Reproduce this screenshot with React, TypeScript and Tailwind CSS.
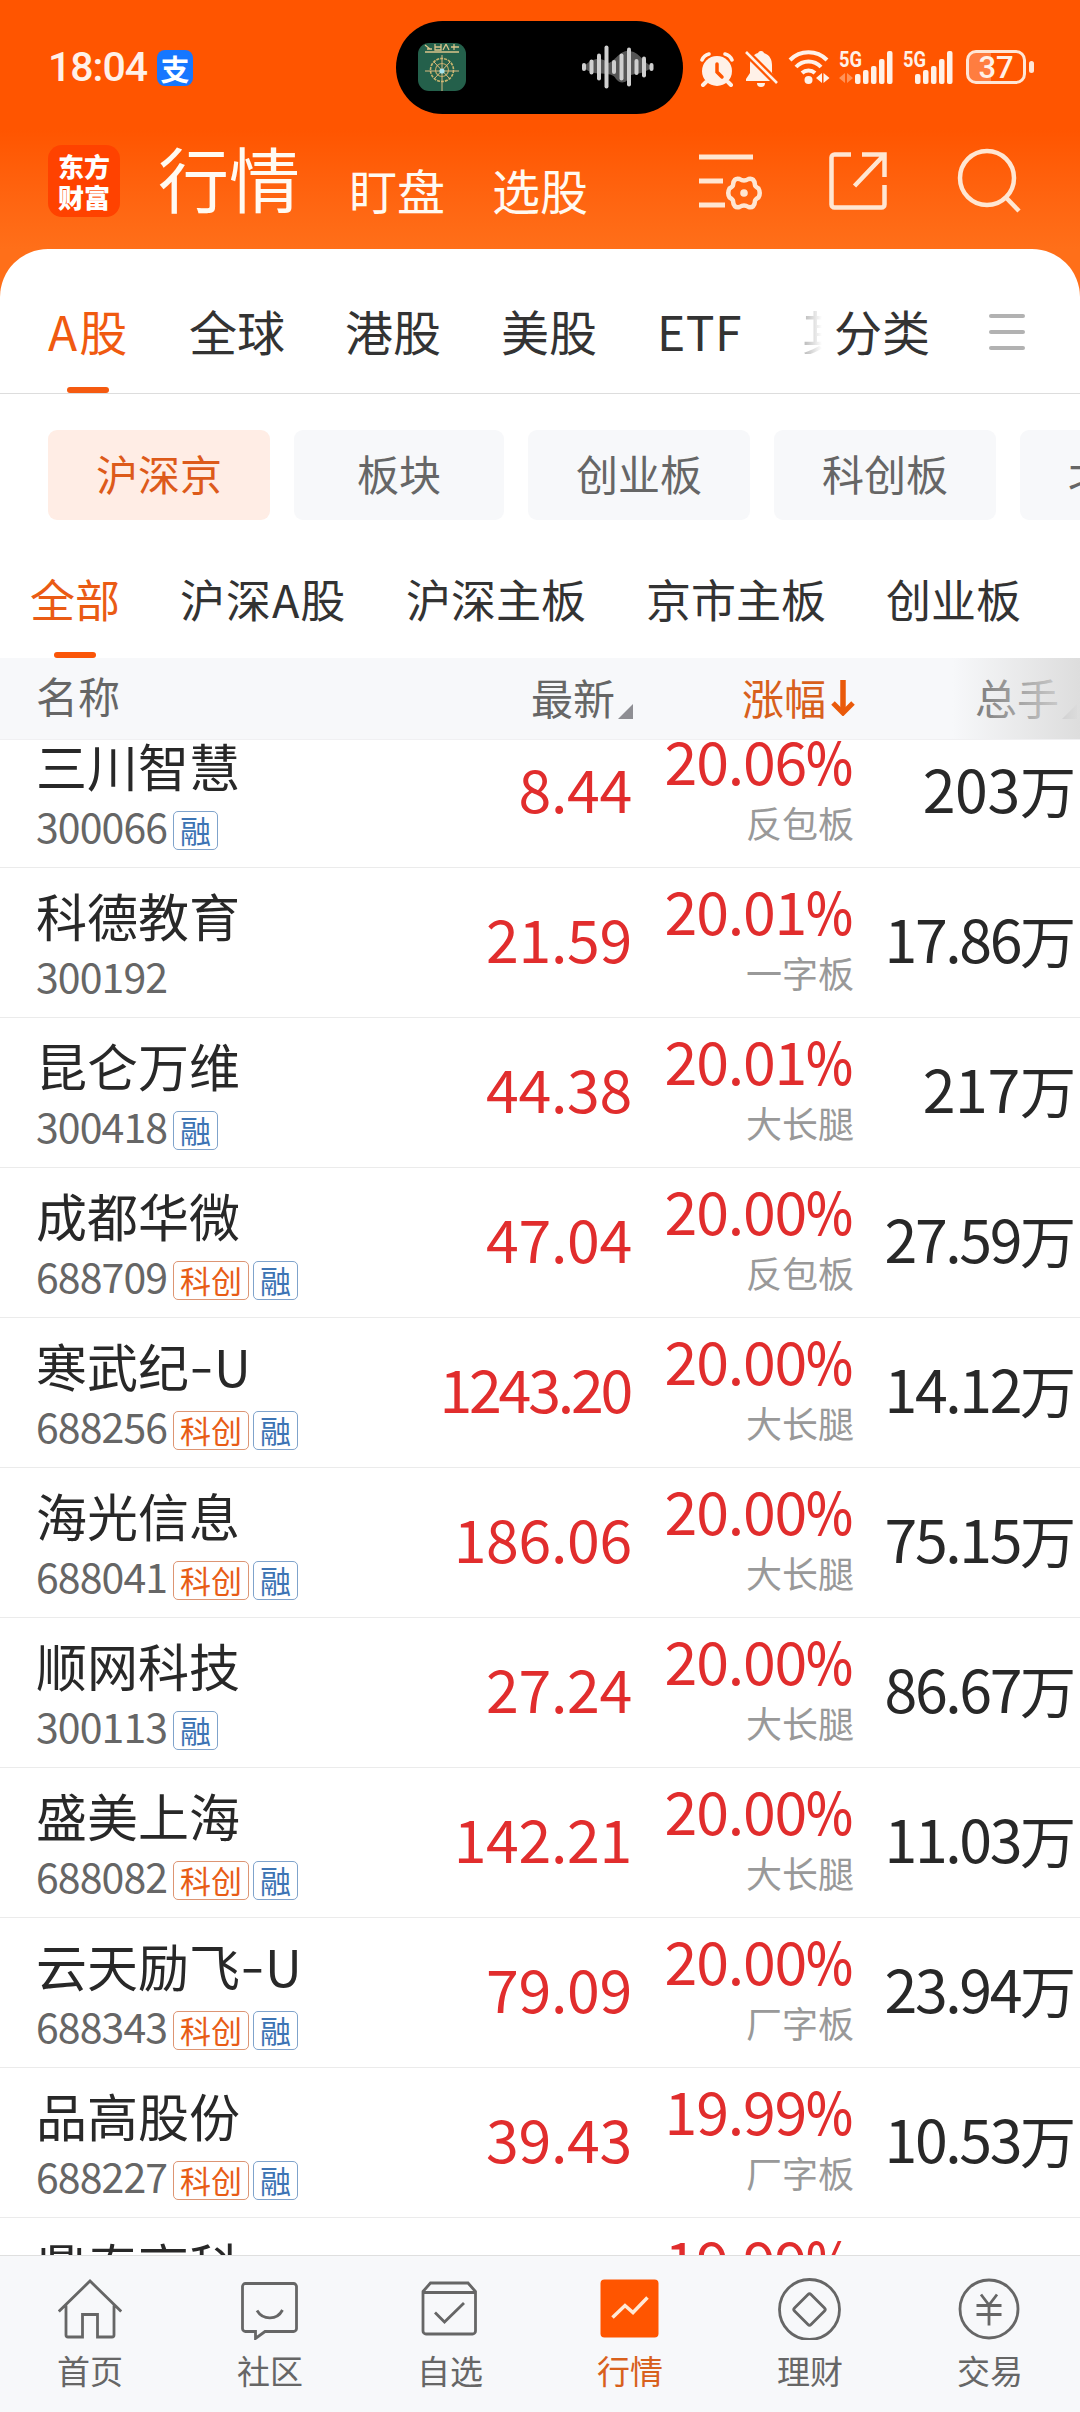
import type { ReactNode } from "react"
import clsx from "clsx"

type Stock = {
    name: string
    unprofitable?: boolean
    code: string
    star?: boolean
    margin?: boolean
    price: string
    change: string
    shape: string
    volume: string
}

const stocks: Stock[] = [
    { name: "三川智慧", code: "300066", margin: true, price: "8.44", change: "20.06", shape: "反包板", volume: "203" },
    { name: "科德教育", code: "300192", price: "21.59", change: "20.01", shape: "一字板", volume: "17.86" },
    { name: "昆仑万维", code: "300418", margin: true, price: "44.38", change: "20.01", shape: "大长腿", volume: "217" },
    { name: "成都华微", code: "688709", star: true, margin: true, price: "47.04", change: "20.00", shape: "反包板", volume: "27.59" },
    { name: "寒武纪", unprofitable: true, code: "688256", star: true, margin: true, price: "1243.20", change: "20.00", shape: "大长腿", volume: "14.12" },
    { name: "海光信息", code: "688041", star: true, margin: true, price: "186.06", change: "20.00", shape: "大长腿", volume: "75.15" },
    { name: "顺网科技", code: "300113", margin: true, price: "27.24", change: "20.00", shape: "大长腿", volume: "86.67" },
    { name: "盛美上海", code: "688082", star: true, margin: true, price: "142.21", change: "20.00", shape: "大长腿", volume: "11.03" },
    { name: "云天励飞", unprofitable: true, code: "688343", star: true, margin: true, price: "79.09", change: "20.00", shape: "厂字板", volume: "23.94" },
    { name: "品高股份", code: "688227", star: true, margin: true, price: "39.43", change: "19.99", shape: "厂字板", volume: "10.53" },
    { name: "鼎泰高科", code: "301377", margin: true, price: "98.76", change: "19.99", shape: "大长腿", volume: "12.48" },
]

const waveBars = [8, 15, 27, 43, 14, 27, 39, 16, 21, 8]
const signalBars = [10, 14, 18, 25, 33]

const Signal = ({ data }: { data?: boolean }) => {
    const start = data ? 16 : 12
    return (
        <svg viewBox={data ? "0 0 54 36" : "0 0 50 36"} className={data ? "w-[54px] h-9" : "w-[50px] h-9"}>
            <text x="0" y="18" fontFamily="Roboto, sans-serif" fontWeight="700" fontSize="22.500" textLength="23" lengthAdjust="spacingAndGlyphs" fill="#fff1e8">5G</text>
            {data && <path d="M0 29l6-5v10zM8 24v10l6-5z" fill="#ff9257" />}
            {signalBars.map((h, i) => (
                <rect key={h} x={start + i * 8} y={35 - h} width="5.500" height={h} rx="2" fill="#fff1e8" />
            ))}
        </svg>
    )
}

const StatusBar = () => (
    <div className="flex items-center shrink-0 h-[134px] pl-12">
        <span className="shrink-0 font-['Roboto'] font-medium text-[41px] leading-none tracking-[-1px] w-[109px] text-[#fff1e8]">18:04</span>
        <span className="flex items-center justify-center shrink-0 size-9 mt-[2px] rounded-lg bg-[#1677ff] text-white text-[29px] font-bold leading-none">支</span>
        <div className="flex items-center justify-between shrink-0 w-[287px] h-[93px] ml-[203px] pl-[22px] pr-7 rounded-full bg-black">
            <svg viewBox="0 0 48 48" className="size-12">
                <rect width="48" height="48" rx="11" fill="#24604b" />
                <path d="M7 2l5 4M9 6h5M17 1v6h6V1M17 4h6M28 1l-3 6M28 1l3 6M36 1v6M33 4h8M7 9h34" stroke="#d9c48c" strokeWidth="1.3" fill="none" />
                <circle cx="24" cy="27" r="11.5" fill="none" stroke="#c8b56e" strokeWidth="1.6" strokeDasharray="3 1" />
                <circle cx="24" cy="27" r="6.5" fill="none" stroke="#b7a766" strokeWidth="1.2" />
                <path d="M24 12v36M7 28h34M16 19l16 17M32 19L16 36" stroke="#d9b982" strokeWidth="1" />
                <circle cx="24" cy="28" r="2.6" fill="#a7e4ee" />
            </svg>
            <svg viewBox="0 0 74 44" className="w-[74px] h-11">
                <path d="M2 22C12 12 20 12 28 18C36 14 40 4 49 6C60 8 62 18 72 22C60 30 56 28 50 30C46 38 40 40 35 34C30 24 14 34 2 22z" fill="#555" />
                {waveBars.map((h, i) => (
                    <rect key={i} x={1 + i * 7.5} y={22 - h / 2} width="4" height={h} rx="2" fill="#cfcfcf" />
                ))}
            </svg>
        </div>
        <svg viewBox="0 0 34 36" className="shrink-0 w-[34px] h-9 ml-[17px] mt-1">
            <circle cx="17" cy="20" r="15" fill="#fff1e8" />
            <path d="M2 9a10 10 0 0 1 7-6M25 3a10 10 0 0 1 7 6" stroke="#fff1e8" strokeWidth="3.5" fill="none" strokeLinecap="round" />
            <path d="M6 31l-3 3M28 31l3 3" stroke="#fff1e8" strokeWidth="4" strokeLinecap="round" />
            <path d="M17 13v8l5 5" stroke="#ff5500" strokeWidth="3.5" fill="none" strokeLinecap="round" />
        </svg>
        <svg viewBox="0 0 34 38" className="shrink-0 w-[34px] h-[38px] ml-[10px] mt-1">
            <path d="M17 1a3 3 0 0 1 3 2c6 2 8 7 8 12v8l4 6v2H2v-2l4-6v-8C6 9 8 5 14 3a3 3 0 0 1 3-2z" fill="#fff1e8" />
            <path d="M13 33h8a4 4 0 0 1-8 0z" fill="#fff1e8" />
            <path d="M0 0l34 34" stroke="#ff5500" strokeWidth="7" />
            <path d="M2 2l31 31" stroke="#fff1e8" strokeWidth="2.6" />
        </svg>
        <svg viewBox="0 0 42 36" className="shrink-0 w-[42px] h-9 ml-[10px]">
            <path d="M2 11a26 26 0 0 1 37 0M8 18a17 17 0 0 1 25 0M14 24a9.5 9.5 0 0 1 13 0" stroke="#fff1e8" strokeWidth="4" fill="none" />
            <circle cx="20.500" cy="31" r="4" fill="#fff1e8" />
            <path d="M28 29l6-5v10zM35.500 24v10l6-5z" fill="#fff1e8" />
        </svg>
        <div className="flex shrink-0 gap-[10px] ml-[9px]">
            <Signal data />
            <Signal />
        </div>
        <div className="flex items-center shrink-0 gap-[3px] ml-[13px]">
            <div className="flex items-center justify-center w-[60px] h-[34px] rounded-[10px] border-[3px] border-[#ffe6d6] bg-linear-to-r from-[#ff7d40] from-40% to-transparent to-40% font-['Roboto'] font-medium text-[31px] leading-none text-[#fff1e8]">37</div>
            <div className="w-[5px] h-3 rounded-full bg-[#ffe6d6]" />
        </div>
    </div>
)

const TopBar = () => (
    <div className="flex items-start shrink-0 h-[115px] pt-[11px] pl-12 text-[#fffaf2]">
        <div className="flex items-center justify-center shrink-0 size-[72px] rounded-[14px] bg-[#ff4200] text-white text-[26px] leading-[31px] font-black text-center">
            东方<br />财富
        </div>
        <h1 className="shrink-0 ml-[38px] -mt-1 w-[142px] text-[71px] leading-[70px]">行情</h1>
        <span className="shrink-0 ml-[49px] w-24 pt-5 text-[48px] leading-[48px]">盯盘</span>
        <span className="shrink-0 ml-[47px] w-24 pt-5 text-[48px] leading-[48px]">选股</span>
        <svg viewBox="0 0 66 60" className="shrink-0 w-[66px] h-[60px] mt-[6px] ml-[111px]" fill="none" stroke="#ffe6d2" strokeWidth="5">
            <path d="M0 6h54M0 30h24M0 54h26" />
            <path d="M40.500 28q4.500 3 9 0q6-1.500 6.500 6q0 1.500 3.500 3.500q2.500 4.500 0 9q-3.500 2-3.500 3.500q-.5 7.500-6.500 6q-4.500-3-9 0q-6 1.500-6.500-6q0-1.500-3.500-3.500q-2.500-4.500 0-9q3.500-2 3.500-3.500q.5-7.500 6.500-6z" strokeWidth="4.500" strokeLinejoin="round" />
            <circle cx="45" cy="42" r="3.800" fill="#ffe6d2" stroke="none" />
        </svg>
        <svg viewBox="0 0 58 58" className="shrink-0 size-[58px] mt-[7px] ml-[64px]" fill="none" stroke="#ffe6d2" strokeWidth="4.500">
            <path d="M22 2.500H5.500a3 3 0 0 0-3 3v47a3 3 0 0 0 3 3h47a3 3 0 0 0 3-3V33M33 2.500h22.500V25M55 3L25.500 34" />
        </svg>
        <svg viewBox="0 0 64 66" className="shrink-0 w-16 h-[66px] mt-[3px] ml-[70px]" fill="none" stroke="#ffe6d2" strokeWidth="4.500">
            <circle cx="30" cy="30" r="27" />
            <path d="M48.500 49L62 63" />
        </svg>
    </div>
)

const MarketTabs = () => (
    <div className="flex items-center shrink-0 h-[145px] pl-12 border-b border-[#dddddd] text-[48px] leading-[48px] text-[#333333]">
        <div className="relative flex items-center shrink-0 h-full w-[82px] mr-[59px] text-[#f05a10] tracking-[2px]">
            <span className="mt-[18px] whitespace-nowrap">A股</span>
            <i className="absolute bottom-0 left-[19px] w-[42px] h-1.5 rounded-full bg-[#f55a10]" />
        </div>
        <span className="mt-[18px] shrink-0 w-24 mr-[60px]">全球</span>
        <span className="mt-[18px] shrink-0 w-24 mr-[60px]">港股</span>
        <span className="mt-[18px] shrink-0 w-24 mr-[60px]">美股</span>
        <span className="mt-[18px] shrink-0 w-[88px] mr-[57px] tracking-[0.5px]">ETF</span>
        <span className="mt-[18px] shrink-0 w-5 mr-3 overflow-hidden whitespace-nowrap text-transparent bg-clip-text bg-linear-to-r from-[#b4b4b4] to-white">其</span>
        <span className="mt-[18px] shrink-0 w-24">分类</span>
        <div className="flex flex-col gap-3 mt-[22px] ml-[59px]">
            <i className="w-9 h-1 rounded-full bg-[#b2b2b2]" />
            <i className="w-9 h-1 rounded-full bg-[#b2b2b2]" />
            <i className="w-9 h-1 rounded-full bg-[#b2b2b2]" />
        </div>
    </div>
)

const chip = "flex items-center justify-center shrink-0 h-[90px] pb-1 rounded-[9px] text-[42px] leading-none"

const Chips = () => (
    <div className="flex shrink-0 gap-6 pt-9 pl-12 overflow-hidden text-[#666666]">
        <div className={clsx(chip, "w-[222px] bg-[#ffede5] text-[#dd5a1a]")}>沪深京</div>
        <div className={clsx(chip, "w-[210px] bg-[#f7f8fa]")}>板块</div>
        <div className={clsx(chip, "w-[222px] bg-[#f7f8fa]")}>创业板</div>
        <div className={clsx(chip, "w-[222px] bg-[#f7f8fa]")}>科创板</div>
        <div className={clsx(chip, "w-[222px] bg-[#f7f8fa]")}>北交所</div>
    </div>
)

const BoardTabs = () => (
    <div className="flex shrink-0 gap-16 h-[138px] pt-14 pl-[30px] overflow-hidden whitespace-nowrap text-[45px] leading-[45px] text-[#333333]">
        <div className="relative shrink-0 w-[90px] text-[#ea5b14]">
            全部
            <i className="absolute bottom-0 left-6 w-[42px] h-1.5 rounded-full bg-[#fa5508]" />
        </div>
        <span className="shrink-0 w-[162px] -ml-1 tracking-[1px]">沪深A股</span>
        <span>沪深主板</span>
        <span className="-ml-[4px]">京市主板</span>
        <span className="-ml-[4px]">创业板</span>
    </div>
)

const SortMark = () => (
    <svg viewBox="0 0 15 15" className="size-[15px] shrink-0 mt-[29px] ml-[3px]">
        <path d="M15 0v15H0z" fill="#8e8e93" />
    </svg>
)

const TableHead = () => (
    <div className="relative flex items-center shrink-0 h-[82px] pl-9 pb-[3px] border-b border-[#f0f0f2] bg-[#f7f8fa] text-[42px] leading-none text-[#666666]">
        <span className="shrink-0 w-[495px] pb-1">名称</span>
        <div className="flex items-center shrink-0 w-[211px]">最新<SortMark /></div>
        <div className="flex items-center shrink-0 w-[233px] text-[#d8601c]">
            涨幅
            <svg viewBox="0 0 24 36" className="w-6 h-9 ml-[5px] mt-[2px]" fill="none" stroke="#ea5a0a">
                <path d="M12 0v33" strokeWidth="5.500" />
                <path d="M2 23l10 10l10-10" strokeWidth="5" />
            </svg>
        </div>
        <div className="flex items-center shrink-0">总手<SortMark /></div>
        <div className="absolute right-0 top-0 w-32 h-full bg-linear-to-r from-[#f7f8fa]/0 to-[#dddddd]" />
    </div>
)

const Tag = ({ className, children }: { className: string, children: ReactNode }) => (
    <span className={clsx("flex items-center justify-center h-[39px] px-[6px] pb-[2px] rounded-[5px] border text-[31px] leading-none", className)}>
        {children}
    </span>
)

const StockRow = ({ stock }: { stock: Stock }) => (
    <div className="flex h-[150px] pl-9 border-b border-[#ebebeb]">
        <div className="shrink-0 w-[364px] pt-[21px]">
            <div className="text-[51px] leading-[52px] text-[#282828] whitespace-nowrap">
                {stock.name}
                {stock.unprofitable && <><span className="inline-block w-[25px] text-center scale-x-[1.35] -translate-y-[2px]">-</span>U</>}
            </div>
            <div className="flex items-center gap-[4px] h-[39px] mt-5">
                <span className="w-[133px] text-[41px] leading-[39px] tracking-[-0.9px] text-[#666666] pb-[10px]">{stock.code}</span>
                {stock.star && <Tag className="text-[#e85d16] border-[#dd9573]">科创</Tag>}
                {stock.margin && <Tag className="text-[#3c74b4] border-[#7fa3cb]">融</Tag>}
            </div>
        </div>
        <div className={clsx("shrink-0 w-[232px] pt-10 text-right text-[59px] leading-[60px] text-[#e12d2d]", stock.price.length > 6 ? "pr-[2px] tracking-[-3.2px]" : "tracking-[-0.3px]")}>
            {stock.price}
        </div>
        <div className="shrink-0 w-[222px] pt-3">
            <div className="flex justify-end pr-[3px] text-[59px] leading-[60px] tracking-[-1.2px] text-[#e12d2d]">
                {stock.change}
                <span className="w-[45px] origin-left scale-x-[0.85] font-medium">%</span>
            </div>
            <div className="mt-[14px] text-right text-[36px] leading-9 text-[#999999]">{stock.shape}</div>
        </div>
        <div className={clsx("shrink-0 w-[222px] pt-10 text-right text-[59px] leading-[60px] text-[#282828]", stock.volume.length > 3 ? "tracking-[-2.4px]" : "tracking-[-0.3px]")}>
            {stock.volume}<span className="text-[56px] tracking-normal">万</span>
        </div>
    </div>
)

const navItems: { label: string, active?: boolean, icon: ReactNode }[] = [
    { label: "首页", icon: <path d="M.8 35.500L32 5l31.200 30.500M8 29.500V59a2 2 0 0 0 2 2h14.500V38.500h15V61H54a2 2 0 0 0 2-2V29.500" /> },
    {
        label: "社区",
        icon: <path d="M7.500 7.500h48a3 3 0 0 1 3 3v42a3 3 0 0 1-3 3H27l-9.500 7v-7h-10a3 3 0 0 1-3-3v-42a3 3 0 0 1 3-3zM19 34.500c6 10 20 10 25.500-.5" />,
    },
    {
        label: "自选",
        icon: <path d="M5 15.500L12.500 7H50l7.500 8.500V55a3 3 0 0 1-3 3H8a3 3 0 0 1-3-3zM5 16.500h52.500M17 36.500l9.500 9.500L46 27" />,
    },
    {
        label: "行情",
        active: true,
        icon: (
            <>
                <rect x="2.500" y="3.500" width="58" height="58" rx="4" fill="#ff5500" stroke="none" />
                <path d="M14.500 41.500L27 29.500l8 7l14.500-15" stroke="#ffe9d6" strokeWidth="3.500" />
            </>
        ),
    },
    {
        label: "理财",
        icon: (
            <>
                <circle cx="31.500" cy="33.500" r="30" />
                <path d="M30 18.500q1.500-1.500 3 0l13.500 13.500q1.500 1.500 0 3L33 48.500q-1.500 1.500-3 0L16.500 35q-1.500-1.500 0-3z" />
            </>
        ),
    },
    {
        label: "交易",
        icon: (
            <>
                <circle cx="31" cy="33" r="29" />
                <path d="M23 18.500l8 10.500l8-10.500M18.500 29.500h25M18.500 38.500h25M31 29v20.500" />
            </>
        ),
    },
]

const BottomNav = () => (
    <nav className="grid grid-cols-6 shrink-0 h-[157px] border-t border-[#dfdfdf] bg-[#f7f8fa]">
        {navItems.map((item) => (
            <div key={item.label} className="flex flex-col items-center pt-5">
                <svg viewBox="0 0 64 64" className="size-16" fill="none" stroke="#666666" strokeWidth="2.800">{item.icon}</svg>
                <span className={clsx("mt-3 text-[33px] leading-9", item.active ? "text-[#d8601c]" : "text-[#666666]")}>{item.label}</span>
            </div>
        ))}
    </nav>
)

const App = () => {
    return (
        <div className="flex flex-col w-[1080px] h-[2412px] overflow-hidden bg-linear-to-b from-[#ff5500] from-[130px] to-[#ff6f19] to-[249px] font-['Noto_Sans_CJK_SC',sans-serif]">
            <StatusBar />
            <TopBar />
            <main className="flex flex-col grow basis-0 min-h-0 rounded-t-[48px] overflow-hidden bg-white">
                <MarketTabs />
                <Chips />
                <BoardTabs />
                <TableHead />
                <div className="grow basis-0 min-h-0 overflow-hidden">
                    <div className="-mt-[22px]">
                        {stocks.map((stock) => <StockRow key={stock.code} stock={stock} />)}
                    </div>
                </div>
            </main>
            <BottomNav />
        </div>
    )
}

export default App
